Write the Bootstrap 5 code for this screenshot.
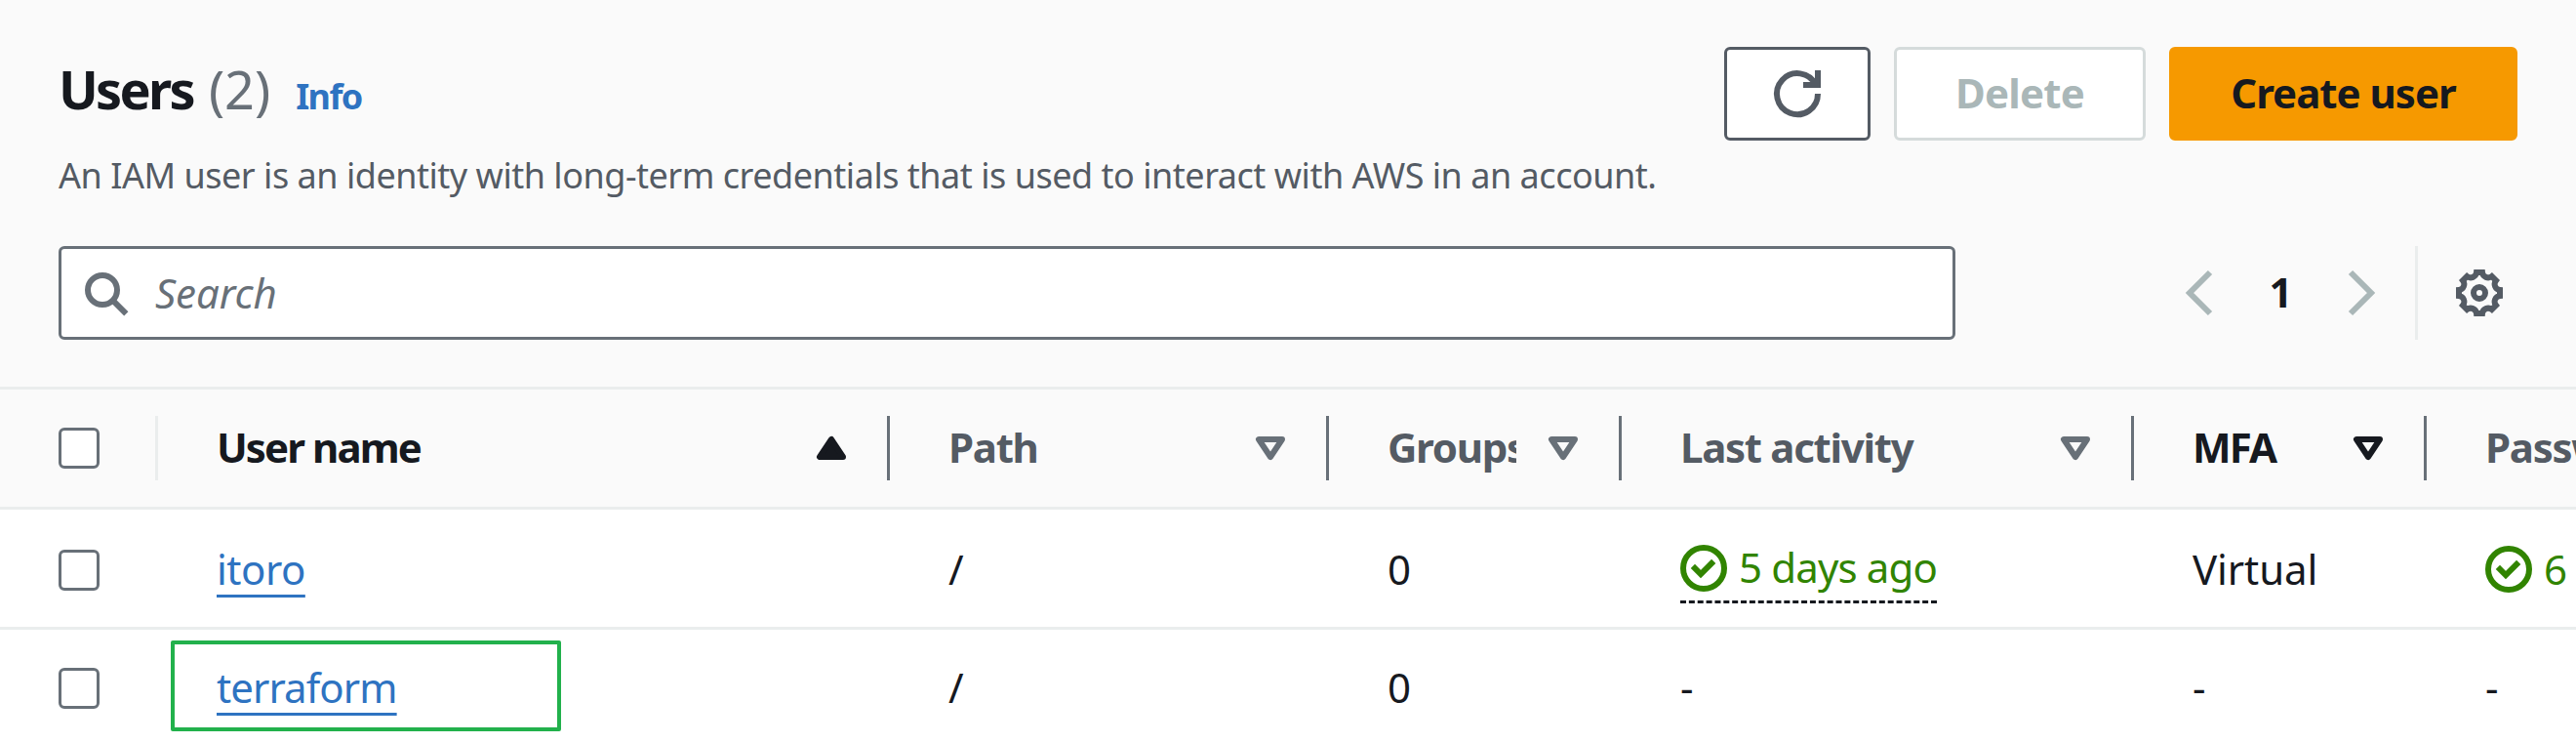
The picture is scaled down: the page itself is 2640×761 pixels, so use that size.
<!DOCTYPE html>
<html lang="en">
<head>
<meta charset="utf-8">
<meta name="viewport" content="width=device-width, initial-scale=1">
<title>Users | IAM</title>
<link href="https://cdn.jsdelivr.net/npm/bootstrap@5.3.0/dist/css/bootstrap.min.css" rel="stylesheet">
<style>
  :root { --ink:#16191f; --muted:#545b64; --edge:#687078; --off:#aab7b8; --line:#eaeded; --link:#2e73c1; --ok:#318400; }
  body { font-family:"Noto Sans","Open Sans",sans-serif; font-size:42px; line-height:66px; color:var(--ink); background:#fff; height:761px; overflow:hidden; letter-spacing:-.9px; }
  svg { display:block; flex:none; width:48px; height:48px; fill:none; stroke:currentColor; stroke-width:2; overflow:visible; }
  .panel-head { background:#fafafa; height:399px; padding:48px 60px 0; border-bottom:3px solid var(--line); }
  .head-row { height:204px; }
  .title { font-size:54px; font-weight:700; line-height:60px; letter-spacing:-2.7px; margin:13px 0 0; }
  .counter { font-weight:400; color:var(--edge); letter-spacing:0; margin-left:16px; }
  .info { font-size:36px; font-weight:700; color:var(--link); letter-spacing:-1.6px; margin-left:26px; text-decoration:none; }
  .desc { font-size:36px; line-height:60px; letter-spacing:-.48px; color:var(--muted); margin:21px 0 0; }
  .act { height:96px; border:3px solid var(--muted); border-radius:6px; background:#fff; color:var(--muted); font-size:42px; font-weight:700; line-height:60px; letter-spacing:-.8px; padding:0 0 2px; }
  .act-refresh { width:150px; padding:0; }
  .act-delete, .act-delete:disabled { width:258px; border-color:#d5dbdb; color:var(--off); background:#fff; opacity:1; }
  .act-create { width:357px; background:#f69900; border-color:#f69900; color:var(--ink); letter-spacing:-1px; }
  .search { width:1944px; height:96px; border:3px solid var(--edge); border-radius:6px; background:#fff; color:var(--edge); padding-left:21px; }
  .search-text { font-style:italic; margin:-1px 0 0 27px; letter-spacing:-.1px; }
  .pager { height:96px; color:var(--off); }
  .page-no { width:114px; color:var(--ink); font-weight:700; margin-top:-3px; }
  .prefs { height:96px; border-left:3px solid var(--line); margin-left:33px; padding:0 15px 0 39px; color:var(--muted); }
  .table-clip { overflow:hidden; }
  .users { width:2900px; table-layout:fixed; border-collapse:separate; border-spacing:0; }
  .users th, .users td { height:123px; vertical-align:top; padding:26px 0 0 60px; border-bottom:3px solid var(--line); white-space:nowrap; }
  .users th { background:#fafafa; color:var(--muted); letter-spacing:-1.3px; }
  .users .first td { padding-top:28px; }
  .users .last td { border-bottom:0; }
  .users .on { color:var(--ink); }
  .users .on .hname { letter-spacing:-1.9px; }
  .hcell { height:66px; position:relative; }
  .hcell svg { color:var(--edge); margin:2px 36px 0 24px; }
  .on .hcell svg { color:var(--ink); }
  .hcell::after { content:""; position:absolute; right:0; top:1px; width:3px; height:66px; background:var(--edge); }
  .hcell.light::after { background:var(--line); }
  .hname { overflow:hidden; }
  .box { width:42px; height:42px; border:3px solid var(--edge); border-radius:6px; background:#fff; margin-top:13px; }
  .ulink { color:var(--link); text-decoration:underline; text-decoration-thickness:3px; text-underline-offset:10px; text-decoration-skip-ink:none; }
  .short { letter-spacing:-.5px; }
  .virtual { letter-spacing:-.1px; }
  .ok { color:var(--ok); gap:12px; }
  .ago { height:68px; border-bottom:3px dashed var(--ink); line-height:62px; letter-spacing:-.86px; }
  .ago svg { margin-top:8px; }
  .marker { position:absolute; left:-47px; top:-15px; width:400px; height:93px; border:4px solid #22b14c; border-radius:2px; }
</style>
</head>
<body>
<svg class="d-none" aria-hidden="true">
  <symbol id="down" viewBox="0 0 16 16"><path d="M4 5h8l-4 6z" stroke-linejoin="round"/></symbol>
  <symbol id="check" viewBox="0 0 16 16"><circle cx="8" cy="8" r="7"/><path d="M4.3 7.3 7 10l4.4-4.4"/></symbol>
</svg>

<header class="panel-head">
  <div class="head-row d-flex justify-content-between align-items-start">
    <div>
      <h1 class="title d-flex align-items-baseline">Users<span class="counter">(2)</span><a class="info" href="#">Info</a></h1>
      <p class="desc">An IAM user is an identity with long-term credentials that is used to interact with AWS in an account.</p>
    </div>
    <div class="d-flex gap-4">
      <button class="btn act act-refresh d-flex align-items-center justify-content-center" aria-label="Refresh">
        <svg viewBox="0 0 16 16"><path d="M10 5h5V0M15 8a7 7 0 1 1-.7-3"/></svg>
      </button>
      <button class="btn act act-delete" disabled>Delete</button>
      <button class="btn act act-create">Create user</button>
    </div>
  </div>
  <div class="d-flex justify-content-between">
    <div class="search d-flex align-items-center">
      <svg viewBox="0 0 16 16"><circle cx="7" cy="7" r="5"/><path d="m10.6 10.6 4.5 4.5"/></svg>
      <span class="search-text">Search</span>
    </div>
    <div class="d-flex">
      <div class="pager d-flex align-items-center">
        <svg viewBox="0 0 16 16"><path d="M11 1 4 8l7 7"/></svg>
        <span class="page-no text-center">1</span>
        <svg viewBox="0 0 16 16"><path d="m5 1 7 7-7 7"/></svg>
      </div>
      <div class="prefs d-flex align-items-center">
        <svg viewBox="0 0 16 16"><circle cx="8" cy="8" r="2"/><path d="M7 1h2A2 2 0 0 0 12.24 2.34L13.66 3.76A2 2 0 0 0 15 7v2A2 2 0 0 0 13.66 12.24L12.24 13.66A2 2 0 0 0 9 15H7A2 2 0 0 0 3.76 13.66L2.34 12.24A2 2 0 0 0 1 9V7A2 2 0 0 0 2.34 3.76L3.76 2.34A2 2 0 0 0 7 1z"/></svg>
      </div>
    </div>
  </div>
</header>

<div class="table-clip">
<table class="users">
  <colgroup><col style="width:162px"><col style="width:750px"><col style="width:450px"><col style="width:300px"><col style="width:525px"><col style="width:300px"><col style="width:413px"></colgroup>
  <thead>
    <tr>
      <th><div class="hcell light d-flex"><div class="box"></div></div></th>
      <th class="on"><div class="hcell d-flex align-items-center"><span class="hname flex-grow-1">User name</span><svg viewBox="0 0 16 16"><path d="M8 5 4 11h8z" fill="currentColor" stroke-linejoin="round"/></svg></div></th>
      <th><div class="hcell d-flex align-items-center"><span class="hname flex-grow-1">Path</span><svg><use href="#down"/></svg></div></th>
      <th><div class="hcell d-flex align-items-center"><span class="hname flex-grow-1">Groups</span><svg><use href="#down"/></svg></div></th>
      <th><div class="hcell d-flex align-items-center"><span class="hname flex-grow-1">Last activity</span><svg><use href="#down"/></svg></div></th>
      <th class="on"><div class="hcell d-flex align-items-center"><span class="hname flex-grow-1">MFA</span><svg><use href="#down"/></svg></div></th>
      <th>Password age</th>
    </tr>
  </thead>
  <tbody>
    <tr class="first">
      <td><div class="box"></div></td>
      <td><a class="ulink short" href="#">itoro</a></td>
      <td>/</td>
      <td>0</td>
      <td><span class="ok ago d-inline-flex align-items-start"><svg><use href="#check"/></svg>5 days ago</span></td>
      <td class="virtual">Virtual</td>
      <td><span class="ok d-flex align-items-center"><svg><use href="#check"/></svg>6 days</span></td>
    </tr>
    <tr class="last">
      <td><div class="box"></div></td>
      <td><div class="position-relative"><a class="ulink" href="#">terraform</a><span class="marker"></span></div></td>
      <td>/</td>
      <td>0</td>
      <td>-</td>
      <td>-</td>
      <td>-</td>
    </tr>
  </tbody>
</table>
</div>
<script src="https://cdn.jsdelivr.net/npm/bootstrap@5.3.0/dist/js/bootstrap.bundle.min.js"></script>
</body>
</html>
